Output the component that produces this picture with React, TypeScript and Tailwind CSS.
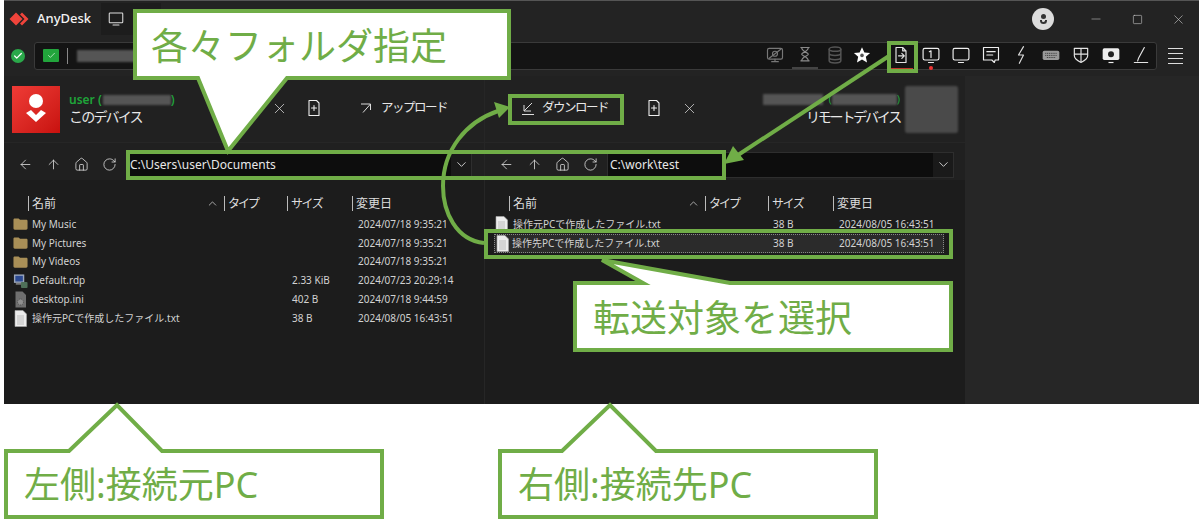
import React from "react";
import { ArrowLeft, ArrowUp, ChevronDown, ChevronUp, Home, RotateCw, X, Minus, Square, Check } from "lucide-react";

const S = ({ children, size = 20, color = "#e4e4e4", sw = 1.4 }: { children: React.ReactNode; size?: number; color?: string; sw?: number }) => (
  <svg width={size} height={size} viewBox="0 0 24 24" fill="none" stroke={color} strokeWidth={sw} strokeLinecap="round" strokeLinejoin="round">
    {children}
  </svg>
);

const toolbar: { node: React.ReactNode; cls?: string }[] = [
  { node: <S color="#777"><rect x="3" y="4" width="18" height="13" rx="2" /><path d="M8 20h8M12 17v3M5 16 19 5" /><circle cx="12" cy="10.5" r="3" /></S> },
  { node: <S color="#8a8a8a"><path d="M7 3h10M7 19h10M8 3c0 5 8 6 8 8s-8 3-8 8M16 3c0 5-8 6-8 8s8 3 8 8" /></S> },
  { node: <S color="#555" sw={1.8}><ellipse cx="12" cy="5" rx="7" ry="2.6" /><path d="M5 5v14c0 1.5 3 2.6 7 2.6s7-1.1 7-2.6V5M5 10c0 1.5 3 2.6 7 2.6s7-1.1 7-2.6M5 15c0 1.5 3 2.6 7 2.6s7-1.1 7-2.6" /></S>, cls: "" },
  { node: <svg width="18" height="18" viewBox="0 0 24 24"><path d="M12 1.5l3.2 7 7.6.8-5.7 5.1 1.6 7.5L12 18l-6.7 3.9 1.6-7.5L1.2 9.3l7.6-.8z" fill="#fff" /><circle cx="12" cy="12.5" r="2.4" fill="#555" /></svg>, cls: "-ml-[3px]" },
  { node: <S><path d="M6 3h8l4 4v14H6zM14 3v4h4" /><path d="M9 13h7M13 10l3 3-3 3" /></S>, cls: "ml-[9px]" },
  { node: <S color="#eee"><rect x="2.5" y="4" width="19" height="14" rx="2" /><path d="M10 8l2-1v8M9 21h6" /></S> },
  { node: <S color="#eee"><rect x="2.5" y="4" width="19" height="14" rx="2" /><path d="M9 21h6" /></S> },
  { node: <S color="#eee"><path d="M3 3h18v15h-4l-1 3-3-3H3z" /><path d="M7 8h10M7 12h7" /></S> },
  { node: <S color="#ddd"><path d="M15 2 9 12h6l-5 10" /></S> },
  { node: <svg width="20" height="20" viewBox="0 0 24 24"><rect x="2" y="7" width="20" height="11" rx="2" fill="#999" /><path d="M5 10h14M5 12.5h14M7 15h10" stroke="#444" strokeWidth="1.2" strokeDasharray="1.4 .8" /></svg> },
  { node: <S color="#e4e4e4"><path d="M4 4h16v9c0 4-4 6-8 8-4-2-8-4-8-8zM12 4v17M4 11h16" /></S> },
  { node: <svg width="20" height="20" viewBox="0 0 24 24"><rect x="2" y="4" width="20" height="14" rx="2" fill="#eee" /><circle cx="12" cy="11" r="3.6" fill="#222" /><path d="M9 21h6" stroke="#eee" strokeWidth="1.4" /></svg> },
  { node: <S color="#e4e4e4"><path d="M9 16 16 3M9 16l-1 3M4 21h16" /></S> },
];

const FileIcon = () => (
  <svg width="15" height="17" viewBox="0 0 15 17"><path d="M2 .5h8l3.5 3.5v12.5H2z" fill="#ececec" stroke="#aaa" strokeWidth=".6" /><path d="M4 6h7M4 8h7M4 10h7M4 12h7M4 14h7" stroke="#aaa" strokeWidth=".7" /></svg>
);
const FolderIcon = () => (
  <svg width="16" height="14" viewBox="0 0 16 14"><path d="M.5 2.5c0-1 .6-1.500 1.500-1.500h4l1.500 1.500h6.500c1 0 1.500.5 1.500 1.500v7.500c0 1-.5 1.500-1.500 1.500H2c-1 0-1.500-.5-1.500-1.500z" fill="#a98f57" /></svg>
);
const RdpIcon = () => (
  <svg width="16" height="16" viewBox="0 0 16 16"><rect x="1" y="1" width="11" height="9" fill="#9aa6bc" /><rect x="2.500" y="2.500" width="8" height="6" fill="#2c4a92" /><rect x="3" y="10" width="7" height="2" fill="#777" /><rect x="8.500" y="9" width="7" height="6.500" rx="1" fill="#4e6f58" /></svg>
);
const IniIcon = () => (
  <svg width="15" height="17" viewBox="0 0 15 17"><path d="M2.500.5h7l3.500 3.500v12.500h-10.500z" fill="#6f6f6f" /><circle cx="7.500" cy="11" r="3" fill="#8f8f8f" stroke="#4a4a4a" strokeDasharray="1 1" /></svg>
);

type Row = { icon: React.ReactNode; name: string; size?: string; date: string; selected?: boolean };
const leftRows: Row[] = [
  { icon: <FolderIcon />, name: "My Music", date: "2024/07/18 9:35:21" },
  { icon: <FolderIcon />, name: "My Pictures", date: "2024/07/18 9:35:21" },
  { icon: <FolderIcon />, name: "My Videos", date: "2024/07/18 9:35:21" },
  { icon: <RdpIcon />, name: "Default.rdp", size: "2.33 KiB", date: "2024/07/23 20:29:14" },
  { icon: <IniIcon />, name: "desktop.ini", size: "402 B", date: "2024/07/18 9:44:59" },
  { icon: <FileIcon />, name: "操作元PCで作成したファイル.txt", size: "38 B", date: "2024/08/05 16:43:51" },
];
const rightRows: Row[] = [
  { icon: <FileIcon />, name: "操作元PCで作成したファイル.txt", size: "38 B", date: "2024/08/05 16:43:51" },
  { icon: <FileIcon />, name: "操作先PCで作成したファイル.txt", size: "38 B", date: "2024/08/05 16:43:51", selected: true },
];

const NavIcons = () => (
  <div className="flex text-[#dcdcdc]">
    {[ArrowLeft, ArrowUp, Home, RotateCw].map((I, i) => (
      <div key={i} className="w-[28px] flex justify-center"><I size={15} strokeWidth={1.3} /></div>
    ))}
  </div>
);

const PathInput = ({ value, cls }: { value: string; cls: string }) => (
  <div className={`h-[26px] flex border border-[#2e2e2e] bg-[#1a1a1a] ${cls}`}>
    <div className="flex-1 bg-[#0d0d0d] text-[12px] leading-[24px] text-[#e8e8e8] pl-[2px]">{value}</div>
    <div className="w-[20px] flex items-center justify-center text-[#ddd]"><ChevronDown size={15} strokeWidth={1.4} /></div>
  </div>
);

const Sep = () => <span className="w-px h-[15px] bg-[#bbb] mr-[3px] shrink-0" />;

const FileList = ({ rows }: { rows: Row[] }) => (
  <div className="flex-1 bg-[#1c1c1c] pt-[14px]">
    <div className="h-[19px] flex items-center text-[12px] text-[#dedede] pl-[24px]">
      <div className="w-[196px] flex items-center"><Sep />名前<ChevronUp size={13} strokeWidth={1.3} className="ml-auto mr-[5px]" /></div>
      <div className="w-[63px] flex items-center tracking-[-2px]"><Sep />タイプ</div>
      <div className="w-[65px] flex items-center tracking-[-1.500px]"><Sep />サイズ</div>
      <div className="flex items-center"><Sep />変更日</div>
    </div>
    <div className="mt-[2px] flex flex-col">
      {rows.map((r) => (
        <div key={r.name} className={`h-[18.8px] flex items-center text-[10px] text-[#d2d2d2] ${r.selected ? "bg-[#2b2b2b] outline-1 outline-dotted outline-[#888] -outline-offset-1 ml-[9px] mr-[21px]" : ""}`}>
          <div className={`flex justify-center shrink-0 ${r.selected ? "w-[18px] pr-[2px]" : "w-[28px] pl-[9px] pr-[4px]"}`}>{r.icon}</div>
          <div className={`${r.selected ? "w-[261px]" : "w-[260px]"} whitespace-nowrap`}>{r.name}</div>
          <div className="w-[66px] whitespace-nowrap">{r.size}</div>
          <div className="whitespace-nowrap">{r.date}</div>
        </div>
      ))}
    </div>
  </div>
);

const FilePlus = () => (
  <S size={20} color="#eee" sw={1.3}><path d="M6 3h9l3 3v15H6zM9 12h6M12 9v6" /></S>
);

const Callout = ({ points, text, cls }: { points: string; text: string; cls: string }) => (
  <>
    <polygon points={points} fill="#fff" stroke="#70ad47" strokeWidth="4" />
    <foreignObject x="0" y="0" width="1200" height="529">
      <div className={`absolute whitespace-nowrap text-[#70ad47] ${cls}`}>{text}</div>
    </foreignObject>
  </>
);

export default function App() {
  return (
    <div className="relative w-[1200px] h-[529px] overflow-hidden bg-white font-['Noto_Sans','Noto_Sans_CJK_JP',sans-serif]">
      <div className="ml-[4px] w-[1195px] h-[404px] flex flex-col bg-[#232323] border-t border-[#555]">
        {/* title bar */}
        <div className="h-[36px] flex items-center shrink-0">
          <svg width="24" height="16" viewBox="0 0 24 16" className="ml-[5px]"><path d="M7 1.500 13.500 8 7 14.500.5 8z" fill="#ef443b" /><path d="M13 1.500 19.500 8 13 14.500l-2-2L15.500 8 11 3.500z" fill="#ef443b" /></svg>
          <span className="ml-[4px] text-[13px] font-medium text-[#f2f2f2]">AnyDesk</span>
          <div className="ml-[10px] h-[32px] w-[60px] bg-[#1d1d1d] flex items-center pl-[6px]">
            <S size={18} color="#ddd"><rect x="3" y="4" width="18" height="13" rx="1" /><path d="M8 20h8" /></S>
          </div>
          <div className="ml-auto w-[22px] h-[22px] rounded-full bg-[#dcdcdc] flex flex-col items-center justify-center">
            <span className="w-[5px] h-[5px] rounded-full bg-[#333]" />
            <span className="w-[7px] h-[4px] mt-[1px] border-b-2 border-x-2 border-[#333] rounded-b-full" />
          </div>
          <div className="ml-[21px] w-[42px] flex justify-center text-[#aaa]"><Minus size={14} strokeWidth={1.2} /></div>
          <div className="w-[41px] flex justify-center text-[#ccc]"><Square size={11} strokeWidth={1.3} /></div>
          <div className="w-[41px] flex justify-center text-[#bbb]"><X size={15} strokeWidth={1.1} /></div>
        </div>
        {/* address bar */}
        <div className="h-[39px] flex items-center shrink-0 pb-[2px]">
          <div className="ml-[7px] w-[14px] h-[14px] rounded-full bg-[#2aa84a] flex items-center justify-center text-white"><Check size={10} strokeWidth={3} /></div>
          <div className="ml-[9px] w-[1123px] h-[28px] rounded-[3px] border border-[#3a3a3a] bg-[#141414] flex items-center">
            <div className="ml-[8px] w-[16px] h-[13px] bg-[#22a53c] rounded-[1px] flex items-center justify-center text-[#d8f5dc]"><Check size={9} strokeWidth={2} /></div>
            <span className="ml-[8px] w-px h-[16px] bg-[#888]" />
            <span className="ml-[9px] w-[70px] h-[12px] bg-[#555] blur-[1px]" />
            <div className="ml-auto flex items-center">
              {toolbar.map((t, i) => (
                <div key={i} className={`relative w-[30px] flex justify-center -translate-y-[1px] ${t.cls ?? ""}`}>
                  {t.node}
                  {i === 1 && <span className="absolute left-[2px] top-[22px] w-[26px] h-[2px] bg-[#444]" />}
                  {i === 4 && <span className="absolute left-[3px] top-[23px] w-[24px] h-px bg-[#c0392b]" />}
                  {i === 5 && <span className="absolute left-[13px] top-[21px] w-[4px] h-[4px] rounded-full bg-[#e33]" />}
                </div>
              ))}
            </div>
          </div>
          <div className="ml-[11px] flex flex-col gap-[4px]">
            <span className="w-[15px] h-px bg-[#ddd]" /><span className="w-[15px] h-px bg-[#ddd]" /><span className="w-[15px] h-px bg-[#ddd]" /><span className="w-[15px] h-px bg-[#ddd]" />
          </div>
        </div>
        {/* main */}
        <div className="flex-1 flex min-h-0">
          {/* left */}
          <div className="w-[480px] flex flex-col">
            <div className="h-[66px] flex items-center bg-[#212121] text-[#e8e8e8]">
              <div className="ml-[8px] w-[48px] h-[47px] bg-gradient-to-br from-[#ef3b36] to-[#c8100d] flex flex-col items-center justify-center">
                <span className="w-[14px] h-[14px] rounded-full bg-white" />
                <svg width="24" height="16" viewBox="0 0 24 16"><path d="M2 5l10 9 10-9-5-3-5 5-5-5z" fill="#fff" /></svg>
              </div>
              <div className="ml-[9px] w-[190px]">
                <div className="flex items-center text-[12px] leading-[15px] font-semibold text-[#1fa53a]">user (<span className="ml-[1px] w-[68px] h-[10px] bg-[#555] blur-[1px]" />)</div>
                <div className="text-[14px] leading-[19px] tracking-[-1.800px]">このデバイス</div>
              </div>
              <div className="ml-[12px] w-[16px] mb-[2px]"><X size={17} strokeWidth={1} /></div>
              <div className="ml-[17px] mb-[2px]"><FilePlus /></div>
              <svg width="14" height="14" viewBox="0 0 14 14" fill="none" stroke="#ddd" strokeWidth="1" className="ml-[35px] mb-[2px]"><path d="M2 3h9.500v0M11.500 3 4 11.500M11.500 3v6" /></svg>
              <span className="ml-[8px] mb-[2px] text-[12.500px] tracking-[-1.500px]">アップロード</span>
            </div>
            <div className="h-[38px] flex items-center bg-[#202020] pl-[7px] pt-[6px] border-t border-[#262626]">
              <NavIcons />
              <PathInput value="C:\Users\user\Documents" cls="ml-[4px] w-[345px]" />
            </div>
            <FileList rows={leftRows} />
          </div>
          {/* right */}
          <div className="w-[481px] flex flex-col border-l border-[#262626]">
            <div className="h-[66px] flex items-center bg-[#212121] text-[#e8e8e8]">
              <svg width="14" height="15" viewBox="0 0 14 15" fill="none" stroke="#ddd" strokeWidth="1" className="ml-[36px] mb-[2px]"><path d="M11 2 3 10M3 4v6h7M1 13.500h12" /></svg>
              <span className="ml-[7px] mb-[2px] text-[12.500px] tracking-[-1.500px]">ダウンロード</span>
              <div className="ml-[36px] mb-[2px]"><FilePlus /></div>
              <div className="ml-[17px] mb-[2px]"><X size={17} strokeWidth={1} /></div>
              <div className="ml-auto text-right mr-[5px]">
                <div className="flex items-center justify-end h-[15px] text-[11px] text-[#1fa53a]">
                  <span className="w-[60px] h-[11px] bg-[#555] blur-[1px] mr-[5px]" />(<span className="w-[65px] h-[11px] bg-[#555] blur-[1px]" />)
                </div>
                <div className="text-[14px] leading-[19px] tracking-[-2.200px]">リモートデバイス</div>
              </div>
              <div className="w-[53px] h-[47px] mr-[7px] bg-[#4a4a4a] rounded-[2px] blur-[1px]" />
            </div>
            <div className="h-[38px] flex items-center bg-[#202020] pl-[7px] pt-[6px] border-t border-[#262626]">
              <NavIcons />
              <PathInput value="C:\work\test" cls="ml-[3px] w-[347px]" />
            </div>
            <FileList rows={rightRows} />
          </div>
          {/* sidebar */}
          <div className="flex-1 bg-[#262626]" />
        </div>
      </div>

      {/* annotations */}
      <svg className="absolute inset-0" width="1200" height="529" viewBox="0 0 1200 529" fill="none">
        <g stroke="#70ad47" strokeWidth="4">
          <rect x="889" y="43" width="27" height="28" />
          <rect x="510" y="96" width="112" height="27" />
          <rect x="128" y="152" width="596" height="26" />
          <rect x="486" y="231" width="465" height="26" />
          <path d="M484 243C456 240 443 212 443 186C443 150 466 122 498 111" />
          <path d="M889 56 735 157" />
        </g>
        <polygon points="510,107 494,102 499,118" fill="#70ad47" />
        <polygon points="724,164 744,160 733,146" fill="#70ad47" />
        <Callout points="135,11 509,11 509,78 287,78 228,151 198,78 135,78" text="各々フォルダ指定" cls="left-[151px] top-[21px] text-[37px] leading-[50px]" />
        <Callout points="575,283 643,283 602,260 730,283 951,283 951,350 575,350" text="転送対象を選択" cls="left-[593px] top-[293px] text-[37px] leading-[50px]" />
        <Callout points="6,451 69,451 117,405 162,451 382,451 382,517 6,517" text="左側:接続元PC" cls="left-[24px] top-[460px] text-[36px] leading-[50px]" />
        <Callout points="500,451 562,451 610,405 656,451 876,451 876,517 500,517" text="右側:接続先PC" cls="left-[518px] top-[460px] text-[36px] leading-[50px]" />
      </svg>
    </div>
  );
}
